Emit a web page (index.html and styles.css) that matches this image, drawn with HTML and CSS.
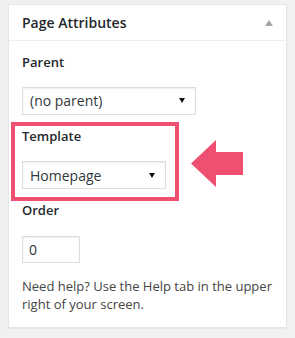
FILE: index.html
```html
<!DOCTYPE html>
<html lang="en">
  <head>
    <meta charset="UTF-8" />
    <meta name="viewport" content="width=device-width, initial-scale=1.0" />
    <title>Page Attributes</title>

    <link rel="stylesheet" href="styles.css">
  </head>

  <body>
    <div class="postbox">
      <div class="postbox-header">
        <h2 class="hndle">Page Attributes</h2>
        <svg class="toggle" width="8" height="6" viewBox="0 0 8 6">
          <polygon points="4,0 8,6 0,6" fill="#a0a5aa" />
        </svg>
      </div>

      <div class="inside">
        <p class="attr-label label-parent">Parent</p>
        <div class="fake-select select-parent">
          <span>(no parent)</span>
          <svg width="6" height="5" viewBox="0 0 6 5"><polygon points="0,0 6,0 3,5" fill="#111" /></svg>
        </div>

        <div class="template-row">
          <div class="highlight">
            <p class="attr-label label-template">Template</p>
            <div class="fake-select select-template">
              <span>Homepage</span>
              <svg width="6" height="5" viewBox="0 0 6 5"><polygon points="0,0 6,0 3,5" fill="#111" /></svg>
            </div>
          </div>
          <!-- 화살표 -->
          <svg class="pointer" width="52" height="47" viewBox="0 0 52 47">
            <polygon points="0,23.5 25,0 25,12 52,12 52,35 25,35 25,47" fill="#ef4f71" />
          </svg>
        </div>

        <p class="attr-label label-order">Order</p>
        <input class="order-input" type="text" value="0" />

        <p class="help">Need help? Use the Help tab in the upper right of your screen.</p>
      </div>
    </div>
  </body>
</html>
```

FILE: styles.css
```css
body {
  margin: 0;
  padding: 4px 8px;
  background-color: #f1f1f1;
  font-family: "Open Sans", "Liberation Sans", sans-serif;
  font-size: 13px;
  line-height: 1.5;
  color: #444;
}

.postbox {
  width: 277px;
  background-color: white;
  border: 1px solid #e5e5e5;
  box-shadow: 0 1px 1px rgba(0, 0, 0, 0.04);
}

.postbox-header {
  display: flex;
  justify-content: space-between;
  align-items: center;
  height: 35px;
  padding: 0 13px;
  border-bottom: 1px solid #eee;
}

.hndle {
  margin: 0;
  font-size: 14px;
  font-weight: 600;
  color: #23282d;
  line-height: 1.4;
}

.toggle {
  display: block;
  margin-right: 0;
}

.inside {
  padding: 12px 13px 13px;
}

.attr-label {
  margin: 0;
  font-weight: 600;
  color: #23282d;
}

.fake-select {
  display: flex;
  justify-content: space-between;
  align-items: center;
  box-sizing: border-box;
  height: 28px;
  padding: 0 10px 0 7px;
  border: 1px solid #ddd;
  box-shadow: inset 0 1px 2px rgba(0, 0, 0, 0.07);
  background-color: white;
  font-size: 14px;
  color: #32373c;
}

.fake-select svg {
  display: block;
}

.select-parent {
  width: 174px;
  margin-top: 14px;
}

.template-row {
  display: flex;
  align-items: center;
  gap: 12px;
  margin: 7px 0 0 -11px;
}

.highlight {
  box-sizing: border-box;
  width: 168px;
  padding: 1px 9px 8px 7px;
  border: 4px solid #ef4f71;
}

.select-template {
  width: 144px;
  margin-top: 15px;
}

.pointer {
  display: block;
  margin-top: 5px;
}

.order-input {
  display: block;
  box-sizing: border-box;
  width: 58px;
  height: 27px;
  margin: 15px 0 0;
  padding: 0 6px;
  border: 1px solid #ddd;
  box-shadow: inset 0 1px 2px rgba(0, 0, 0, 0.07);
  font-family: "Open Sans", "Liberation Sans", sans-serif;
  font-size: 14px;
  color: #32373c;
}

.help {
  margin: 14px 0 0;
  line-height: 18.5px;
}
```
